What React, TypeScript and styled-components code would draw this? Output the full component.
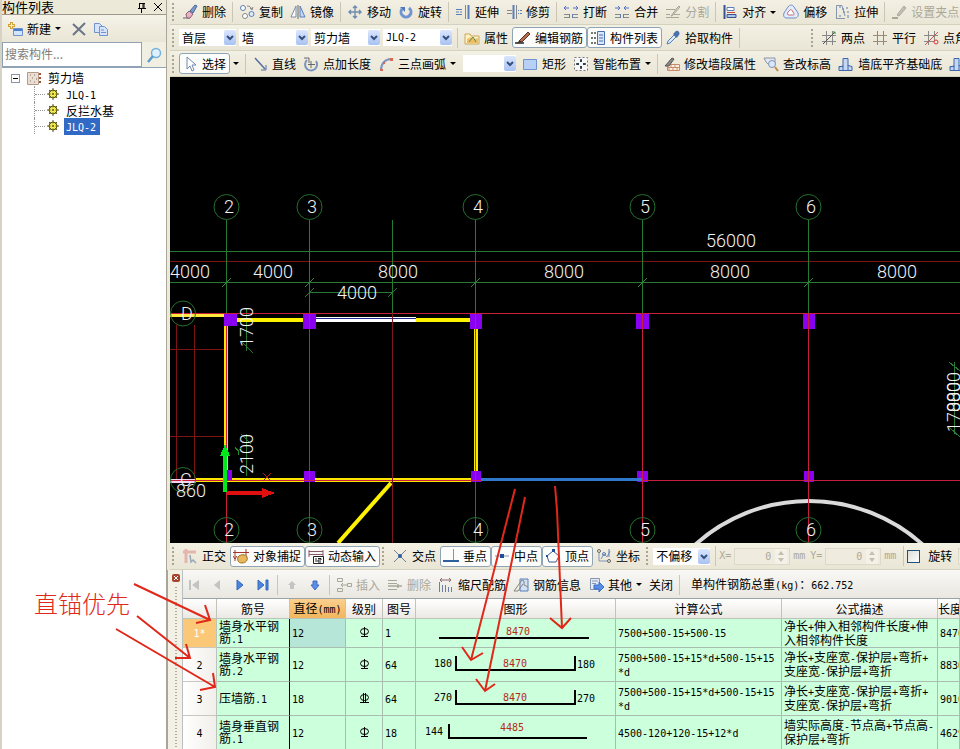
import React from "react";
import styled, { createGlobalStyle, css } from "styled-components";

const CJK = `"Noto Sans CJK SC", sans-serif`;
const MONO = `"DejaVu Sans Mono", "Noto Sans CJK SC", monospace`;
const RED = "#e0281a";

const GlobalStyle = createGlobalStyle`
  *, *::before, *::after { box-sizing: border-box; }
  body { margin: 0; font: 12px/16px ${CJK}; color: #000; background: #fff; }
  button, input, select { font: inherit; color: inherit; margin: 0; padding: 0; }
`;

const Page = styled.div`
  position: relative;
  display: grid;
  grid-template-columns: 167px minmax(0, 1fr);
  height: 100vh;
  overflow: hidden;
`;

const Latin = styled.span`
  font-family: ${MONO};
  font-size: 10px;
`;

/** Sets runs of Latin characters in the narrow fixed-width face. */
function Mixed({ children }: { children: string }) {
  const runs = children.split(/([\x20-\x7e]+)/).filter(Boolean);
  return (
    <>
      {runs.map((r, i) => (/^[\x20-\x7e]/.test(r) ? <Latin key={i}>{r}</Latin> : r))}
    </>
  );
}

/* ---------- icons ---------- */

const B = "#5a7fb8";
const G = "#a9a698";
const K = "#222";

const icons: Record<string, React.ReactNode> = {
  erase: <><path d="M1 14h7" stroke="#666" /><path d="M4 10l3-3 4 3-3 4H5z" fill="#e9b3c4" stroke="#8a5f78" /><path d="M8 7l5-6 2 1-4 7z" fill="#7a9cd0" stroke="#4a6690" /></>,
  copy: <><circle cx="4" cy="4" r="2.5" stroke={B} fill="#fff" /><circle cx="6" cy="12" r="2.5" stroke="#888" fill="#fff" /><circle cx="12.500" cy="10" r="2.5" stroke={B} fill="#dfe9fa" /><path d="M8 2c3 0 4 1 5 4M11 4l2 2 1-3" stroke="#888" /></>,
  mirror: <><path d="M6 2v11H1z" stroke="#7b8ba8" fill="#fff" /><path d="M10 2v11h5z" stroke={B} fill="#c4d7f5" /><path d="M8 1v14" stroke="#666" /></>,
  move: <path d="M8 2v12M2 8h12M6 4l2-2 2 2M6 12l2 2 2-2M4 6L2 8l2 2M12 6l2 2-2 2" stroke="#6c8db0" strokeWidth="1.4" />,
  rotate: <><path d="M4 5a5 5 0 1 0 7-1" stroke="#6f94d2" strokeWidth="3" /><path d="M2 3h5v5z" fill="#4d76bd" /></>,
  extend: <><path d="M1 8h3M5 8h2M1 5.500h6M1 10.500h6" stroke={B} /><path d="M10.500 1v14" stroke="#888" /><path d="M13.500 1v14" stroke={B} strokeWidth="2" /></>,
  trim: <><path d="M1 6.500h5M1 9.500h5" stroke="#888" /><path d="M7.500 1v14" stroke={B} strokeWidth="2" /><path d="M10.500 1v14" stroke="#888" /><path d="M12 6.500h1M14 6.500h2M12 9.500h1M14 9.500h2" stroke={B} /></>,
  split: <><path d="M1 4h5M3 2L1 4l2 2M10 4h5M13 2l2 2-2 2" stroke="#5572c8" /><path d="M1 10.500h5M1 13.500h5M10 10.500h5M10 13.500h5" stroke="#888" /><path d="M6.500 10v4M9.500 10v4" stroke={B} /></>,
  merge: <><path d="M1 4h5M4 2l2 2-2 2M10 4h5M12 2l-2 2 2 2" stroke="#5572c8" /><path d="M1 10.500h5M1 13.500h5M10 10.500h5M10 13.500h5" stroke="#888" /><path d="M6.500 10v4M9.500 10v4" stroke={B} /></>,
  cut: <><path d="M1 5.500h9M1 13.500h13M1 10.500h4M9 10.500h6" stroke={G} /><path d="M6 12l6-8 2-2 1 1-8 9z" stroke={G} fill="#d6d3c6" /></>,
  align: <><path d="M2.500 1v14" stroke="#36538e" strokeWidth="2" /><path d="M5 3.500h7v3H5z" fill="#fff" stroke={B} /><path d="M5 10.500h9v3H5z" fill="#a9c3ee" stroke="#36538e" /><path d="M5 8.500h8" stroke="#c44" /></>,
  offset: <><path d="M5 3c2-3 5-2 6 0l4 6c1 3-1 5-3 5H4c-3 0-4-2-3-5z" stroke="#6b8fcb" fill="#e4ecfa" /><path d="M7 6c1-1 2 0 3 2 2 3 1 3-1 3H6c-2 0-2-1-1-3z" stroke="#c46a7a" fill="#fff" /></>,
  stretch: <><path d="M2.500 14V1.500H8L11 12M2 14.500h9" stroke="#8794ad" /><path d="M5 3h2M8 5h2M9 8h2M5 12h2M13 3v2M14 7v2M14 11v3" stroke={B} /></>,
  grip: <><path d="M1 14h6" stroke={G} strokeWidth="2" /><path d="M6 11l7-9 2 2-7 8z" fill="#c5c2b4" stroke={G} /></>,
  property: <><path d="M1 4h5l1 2h8v8H1z" fill="#fff2c8" stroke="#c9a559" /><path d="M3 9l4-2 3 2 4-1v5H3z" fill="#f0c060" /><path d="M5 12l4-5 3 5" stroke="#5b8a5b" /></>,
  rebar: <><path d="M0 13h9" stroke={K} strokeWidth="1.500" /><path d="M4 11l9-9 2 2-8 8z" fill="#b26a4a" stroke="#5a3426" /><path d="M4 11l3 1-5 1z" fill={K} /></>,
  list: <><path d="M7.500 1.500h7v13h-7z" fill="#dce8fa" stroke="#4a6fae" /><path d="M9 5h4M9 8h4M9 11h4" stroke="#4a6fae" /><path d="M1 3h2M1 8h2M1 13h2M4 3h2M4 8h2M4 13h2" stroke="#777" strokeWidth="2" /></>,
  picker: <><path d="M2 14l1-3 6-6 2 2-6 6z" fill="#d9e8fa" stroke={B} /><path d="M8 4l4 4 1-2c2-1 2-4 0-5s-3 1-3 1z" fill="#4a6fae" /></>,
  twoPoint: <><path d="M5.500 1v14M11.500 1v14M1 5.500h14M1 11.500h14" stroke="#888" /><path d="M2 14L14 2" stroke="#555" /><path d="M12 2h2v2" stroke="#3a9a3a" /></>,
  parallel: <><path d="M5.500 1v14M11.500 1v14" stroke="#6b87c4" /><path d="M1 5.500h14M1 11.500h14" stroke="#998d7a" /></>,
  pointAngle: <><path d="M5.500 1v14M1 5.500h14M11.500 1v10M1 11.500h10" stroke="#888" /><path d="M2 15L15 2" stroke="#c55" /><circle cx="13" cy="12" r="2" stroke="#d33" /></>,
  cursor: <path d="M5 1v12l3-3 2 5 2-1-2-5h4z" fill="#fff" stroke="#7388ad" />,
  line: <><path d="M3 2l10 11" stroke="#536f9e" strokeWidth="1.500" /><path d="M14 9v5H9" stroke="#536f9e" /></>,
  addLen: <><path d="M4 4a6 6 0 1 0 9 1" stroke="#7b94bd" strokeWidth="2" /><path d="M1 2h5v5M8 5v7M5 8.500h7" stroke="#666" /></>,
  arc: <><path d="M3 14C3 8 7 3 13 3" stroke="#7d95c0" strokeWidth="2" /><path d="M2 13h3v2H2zM12 2h3v3h-3zM5 6h2v2H5z" fill="#d9675a" /></>,
  rect: <path d="M1.500 3.500h13v10h-13z" fill="#b8d0f6" stroke="#6f93cc" />,
  smart: <><path d="M1.500 1.500h13v13h-13z" stroke="#777" strokeDasharray="2 2" fill="#f7f7f7" /><path d="M8 3v3M8 10v3M3 8h3M10 8h3M7 5h2M7 11h2M5 7v2M11 7v2" stroke="#234" strokeWidth="1.500" /></>,
  wall: <><path d="M3.500 8.500h12v6h-12zM3 11.500h12M7 8v3M11 8v3M5 12v3M9 12v3M13 12v3" stroke="#c98a68" fill="#fff0e4" /><path d="M1 10l7-8 2 1-5 7z" fill="#8a8a8a" stroke="#555" /></>,
  level: <><path d="M1 2h11v5l-4 4-5-5z" fill="#e4e8ef" stroke="#8794ad" /><circle cx="9" cy="8" r="3.500" fill="#d8e8fc" stroke="#7f92b5" /><path d="M12 11l3 4" stroke="#c08a50" strokeWidth="2" /></>,
  base: <><path d="M5 2.500h5v7l4 1v4H1v-4h4z" fill="#c4d7f5" stroke="#3f66a8" /><path d="M5 10v4M10 9v5M1 11l4-1" stroke="#3f66a8" /></>,
  ortho: <><path d="M1 4h13M4 1v14" stroke="#e4b5ac" strokeWidth="3" /><path d="M8 7l1 7 2-2 3 3" stroke="#9aa6ba" strokeWidth="1.500" /></>,
  snap: <><path d="M2 2v11M0 8l2 3 2-3M13 1v8M0 4.500h16" stroke="#a3372b" /><path d="M5 9c2-3 8-3 9 0s-1 6-5 6-5-3-4-6z" fill="#e9b75c" stroke="#9a7128" /></>,
  dyn: <><path d="M1 2v7M15 2v7M1 3.500h14M1 6.500h14" stroke="#8a5a64" /><path d="M5.500 8.500h10v7h-10z" fill="#fff" stroke={K} /><path d="M8 10v4M10 10.500h3v1.500h-3v2h3" stroke={K} /></>,
  cross: <><path d="M2 2l12 12M14 2L2 14" stroke="#6b7f9e" /><circle cx="8" cy="8" r="2" fill="#2e5f9e" /></>,
  perp: <><path d="M10.500 1v12" stroke="#7f95b8" /><path d="M0 13h16" stroke="#2e5f9e" strokeWidth="2" /></>,
  mid: <><path d="M1 8h14" stroke="#7f95b8" /><path d="M6 6h4v4H6z" fill="#1e4f9a" /></>,
  vertex: <><path d="M8 3l6 5-3 6H4L2 8z" stroke="#3f5f90" /><path d="M7 1h3v3H7zM1 7h2v2H1z" fill="#1e4f9a" /></>,
  coord: <><path d="M3 5v8h9M5 11l3-5 3 3 3-6" stroke="#7f95b8" /><circle cx="3" cy="3" r="1.500" stroke="#666" /><circle cx="8" cy="6" r="1.500" stroke={B} /><circle cx="13" cy="13" r="1.500" stroke="#666" /><path d="M13 1v8" stroke={B} /></>,
  first: <path d="M3 3h2v10H3zM13 3v10L6 8z" fill="#c3c3c3" />,
  prev: <path d="M11 3v10L5 8z" fill="#c3c3c3" />,
  next: <path d="M5 3v10l6-5z" fill="#4a86e0" stroke="#3568bd" />,
  last: <path d="M3 3v10l6-5zM11 3h2v10h-2z" fill="#4a86e0" stroke="#3568bd" />,
  up: <path d="M8 4l4 4h-2v4H6V8H4z" fill="#c3c3c3" />,
  down: <path d="M8 13l4-5h-2V4H6v4H4z" fill="#5b8ee8" stroke="#3f6dc4" />,
  insert: <><path d="M1.500 1.500h5v3h-5zM1.500 11.500h5v3h-5zM11.500 6.500h4v3h-4z" stroke={G} /><path d="M11 8H5M7 6L5 8l2 2" stroke={G} /></>,
  remove: <><path d="M1 3.500h9M1 6.500h9M1 12.500h9" stroke={G} /><path d="M1 9h14M11 7v4" stroke={G} strokeWidth="1.500" /></>,
  scale: <><path d="M2 3h11M4 1L2 3l2 2M11 1l2 2-2 2" stroke="#8a6a6a" /><path d="M1.500 5v10M4.500 8v7M7.500 8v7M10.500 10v5M13.500 10v5" stroke="#6f7f9e" /></>,
  info: <><path d="M7 2h8v12H7z" fill="#cfe0f8" stroke={B} /><path d="M1 14L9 3l2 1v4l4 2M1 14h4l5-7" stroke="#8a8577" /></>,
  other: <><path d="M2.500 1.500h9v11h-9z" fill="#e4ecf8" stroke="#8794ad" /><path d="M4 4h6M4 6.500h4" stroke="#8794ad" /><path d="M6 8h5V5l5 5-5 5v-3H6z" fill="#5b8ee8" stroke="#3f6dc4" /></>,
  create: <><path d="M6.500 7.500h9v7h-9z" fill="#d3e5fb" stroke="#6f93cc" /><path d="M7 9h8" stroke="#4a7fd0" strokeWidth="2" /><path d="M4.500 1v7M1 4.500h7" stroke="#d3a13a" strokeWidth="3" /><path d="M4.500 2v5M2 4.500h5" stroke="#fff3b8" /></>,
  del: <path d="M2 3l12 11M14 2L2 14" stroke="#6b7588" strokeWidth="2" />,
  dup: <><path d="M1.500 2.500h5l3 3v6h-8z" fill="#d5e4fa" stroke="#6f93cc" /><path d="M6.500 5.500h5l3 3v6h-8z" fill="#d5e4fa" stroke="#6f93cc" /><path d="M8 9h3M8 11.500h5" stroke="#6f93cc" /></>,
  search: <><circle cx="10" cy="6" r="4.500" fill="#dff0fd" stroke="#74b2de" strokeWidth="1.500" /><path d="M7 9l-5 6" stroke="#5b9dcc" strokeWidth="2.500" /></>,
  pin: <path d="M5.500 4v5M9 4v5M10 4v5M5 4.500h6M4 9.500h8M7.500 10v4" stroke="#000" />,
  close: <path d="M4 4l8 8M12 4l-8 8" stroke="#000" />,
  wallNode: <><path d="M1.500 2.500h11v12h-11z" fill="#eadfd4" stroke="#b49a85" /><path d="M4 5h1M8 5h1M6 8h1M10 9h1M4 11h1M8 12h1" stroke="#86705e" /><path d="M13 4h2M13 8h2M13 12h2" stroke="#a3513c" strokeWidth="2" /></>,
  gear: <><circle cx="8" cy="8" r="4" fill="#f7ec50" stroke="#5b5616" /><path d="M8 2v12M2 8h12M4 4l8 8M12 4l-8 8" stroke="#5b5616" /><circle cx="8" cy="8" r="2.500" fill="#f7ec50" /><circle cx="8" cy="8" r="1" fill="#5b5616" /></>,
};

const Glyph = styled.svg`
  flex: none;
  width: 16px;
  height: 16px;
  fill: none;
`;

const Icon = ({ name }: { name: string }) => (
  <Glyph viewBox="0 0 16 16" aria-hidden="true">{icons[name]}</Glyph>
);

const Caret = styled.i`
  flex: none;
  border: 3px solid transparent;
  border-top-color: currentColor;
  border-bottom: 0;
`;

/* ---------- toolbar parts ---------- */

const Bar = styled.div<{ $h?: number }>`
  display: flex;
  align-items: center;
  flex: none;
  height: ${(p) => p.$h ?? 26}px;
  overflow: hidden;
  white-space: nowrap;
  background: linear-gradient(#f3f0e4, #e9e6d6);
  border-bottom: 1px solid #d5d1bf;
`;

const Grip = styled.span`
  flex: none;
  width: 2px;
  height: 18px;
  margin: 0 5px 0 2px;
  background: repeating-linear-gradient(#a8a595 0 2px, transparent 2px 4px);
`;

const Sep = styled.span`
  flex: none;
  width: 1px;
  height: 20px;
  margin: 0 3px 0 2px;
  background: #cbc7b5;
`;

const Tool = styled.button<{ $on?: boolean }>`
  display: flex;
  align-items: center;
  gap: 4px;
  flex: none;
  height: 21px;
  padding: 0 3px 0 2px;
  border: 1px solid transparent;
  border-radius: 3px;
  background: none;
  &:disabled { color: #aca899; }
  ${(p) => p.$on && css`
    background: #fcfcfa;
    border-color: #8fa5b5;
  `}
`;

const Space = styled.span<{ $w: number }>`
  flex: none;
  width: ${(p) => p.$w}px;
`;

type ItemProps = { icon?: string; text?: string; on?: boolean; off?: boolean; menu?: boolean; label?: string };
const Item = ({ icon, text, on, off, menu, label }: ItemProps) => (
  <Tool type="button" $on={on} disabled={off} aria-pressed={on} aria-label={label}>
    {icon && <Icon name={icon} />}
    {text}
    {menu && <Caret />}
  </Tool>
);

const ComboBox = styled.span<{ $w: number }>`
  display: grid;
  grid-template-columns: minmax(0, 1fr) 12px;
  flex: none;
  width: ${(p) => p.$w}px;
  height: 17px;
  margin-right: 3px;
  background: #fff;
`;

const Select = styled.select<{ $latin?: boolean }>`
  grid-area: 1 / 1 / 2 / 3;
  appearance: none;
  width: 100%;
  padding: 0 12px 0 3px;
  border: 0;
  background: transparent;
  line-height: 16px;
  ${(p) => p.$latin && css`font-family: ${MONO}; font-size: 10px;`}
`;

const DropMark = styled.svg`
  grid-area: 1 / 2;
  width: 12px;
  height: 15px;
  margin-top: 1px;
  border-radius: 2px;
  background: linear-gradient(#dbe6fd, #a9c2f3);
  pointer-events: none;
  fill: none;
  stroke: #33507e;
  stroke-width: 2px;
`;

const Combo = ({ w, value, label, latin }: { w: number; value: string; label: string; latin?: boolean }) => (
  <ComboBox $w={w}>
    <Select aria-label={label} $latin={latin}><option>{value}</option></Select>
    <DropMark viewBox="0 0 12 15"><path d="M3 6l3 3 3-3" /></DropMark>
  </ComboBox>
);

/* ---------- component list panel ---------- */

const Side = styled.aside`
  display: flex;
  flex-direction: column;
  border-left: 2px solid #d6d3c6;
  border-right: 1px solid #a9a697;
  background: #fff;
`;

const SideTitle = styled.header`
  display: flex;
  align-items: center;
  height: 15px;
  background: #ece9d8;
  border-bottom: 1px solid #9c998a;
  h1 { flex: 1; margin: 0; font: 13px/14px ${CJK}; }
`;

const IconButton = styled.button`
  display: flex;
  border: 0;
  background: none;
`;

const SideTools = styled.div`
  display: flex;
  align-items: center;
  gap: 6px;
  height: 27px;
  padding-left: 2px;
  background: linear-gradient(#f5f2e8, #e9e6d6);
`;

const SearchRow = styled.div`
  display: grid;
  grid-template-columns: minmax(0, 1fr) 24px;
  align-items: center;
  height: 25px;
  background: #f1eee2;
  button { justify-content: center; }
`;

const SearchInput = styled.input`
  height: 25px;
  padding: 0 2px 3px;
  border: 1px solid #8fa3b5;
  background: #fff;
  &::placeholder { color: #807d78; opacity: 1; }
`;

const Tree = styled.ul`
  flex: 1;
  margin: 0;
  padding: 2px 0 0 9px;
  list-style: none;
  border-top: 1px solid #8fa3b5;
  ul { margin: 0 0 0 23px; padding: 0; list-style: none; }
`;

const Branch = styled.div`
  display: flex;
  align-items: center;
  gap: 6px;
  height: 16px;
`;

const Expander = styled.button`
  display: grid;
  place-items: center;
  width: 9px;
  height: 9px;
  border: 1px solid #8794ad;
  background: #fff;
  &::before { content: ""; width: 5px; height: 1px; background: #000; }
`;

const Leaf = styled.li`
  display: flex;
  align-items: center;
  height: 16px;
  border-left: 1px dotted #999;
  &::before { content: ""; width: 10px; border-top: 1px dotted #999; }
`;

const LeafName = styled.span<{ $selected?: boolean }>`
  margin-left: 3px;
  padding: 0 4px 0 2px;
  line-height: 15px;
  ${(p) => p.$selected && css`background: #316ac5; color: #fff;`}
`;

const SidePanel = () => (
  <Side>
    <SideTitle>
      <h1>构件列表</h1>
      <IconButton aria-label="固定"><Icon name="pin" /></IconButton>
      <IconButton aria-label="关闭列表"><Icon name="close" /></IconButton>
    </SideTitle>
    <SideTools>
      <Item icon="create" text="新建" menu />
      <IconButton aria-label="删除构件"><Icon name="del" /></IconButton>
      <IconButton aria-label="复制构件"><Icon name="dup" /></IconButton>
    </SideTools>
    <SearchRow>
      <SearchInput aria-label="搜索构件" placeholder="搜索构件..." />
      <IconButton aria-label="搜索"><Icon name="search" /></IconButton>
    </SearchRow>
    <Tree>
      <li>
        <Branch><Expander aria-label="折叠" /><Icon name="wallNode" />剪力墙</Branch>
        <ul>
          {["JLQ-1", "反拦水基", "JLQ-2"].map((n) => (
            <Leaf key={n}>
              <Icon name="gear" />
              <LeafName $selected={n === "JLQ-2"}><Mixed>{n}</Mixed></LeafName>
            </Leaf>
          ))}
        </ul>
      </li>
    </Tree>
  </Side>
);

/* ---------- drawing area ---------- */

const Main = styled.main`
  display: flex;
  flex-direction: column;
  min-width: 0;
  height: 100vh;
`;

const Upper = styled.section`
  display: flex;
  flex-direction: column;
  flex: 1;
  min-height: 0;
  padding-left: 3px;
  background: #ece9d8;
`;

const Plan = styled.svg`
  flex: 1;
  width: 100%;
  min-height: 0;
  background: #000;
  fill: none;
  shape-rendering: crispEdges;
  text { fill: #f2f2f2; font: 300 18px Roboto, sans-serif; }
`;

const axes: [number, string][] = [[226, "2"], [309, "3"], [475, "4"], [642, "5"], [808, "6"]];
const columns: number[][] = [
  [224, 313, 13, 13], [303, 313, 13, 16], [470, 313, 12, 16], [636, 313, 13, 16], [803, 313, 12, 16],
  [227, 470, 5, 11], [304, 471, 11, 11], [471, 471, 10, 11], [637, 471, 11, 11], [804, 471, 10, 11],
];
const dims: [number, number, string][] = [
  [170, 278, "4000"], [253, 278, "4000"], [378, 278, "8000"], [544, 278, "8000"], [710, 278, "8000"],
  [877, 278, "8000"], [706, 247, "56000"], [337, 299, "4000"],
];

const PlanView = () => (
  <Plan viewBox="170 77 790 466" preserveAspectRatio="xMinYMin slice" role="img" aria-label="平面图">
    <path d="M176.500 325V480M194.500 325V480M170 349.500H226M170 436.500H226M170 261.500H960" stroke="#7c1414" />
    <path d="M170 251.500H960M170 282.500H960M309 292.500H392M226.500 220V313M309.500 220V313M392.500 220V313M475.500 220V313M642.500 220V313M808.500 220V313" stroke="#267a34" />
    {axes.map(([x]) => <path key={x} d={`M${x - 4} 287l9-9`} stroke="#2f8a3c" />)}
    <path d="M305 297l9-9M388 297l9-9M246 309v42M241 341l12 12M246 434v42M241 434l10 10M954 362v72M949 362l11 9M949 427l11 10" stroke="#267a34" />

    <path d="M170 315.500H224" stroke="#ffe93c" strokeWidth="3" />
    <path d="M237 320H303M416 320H470" stroke="#fff200" strokeWidth="4" />
    <path d="M316 319.500H416" stroke="#fff" strokeWidth="5" />
    <path d="M316 318.500H416" stroke="#26268c" />
    <path d="M226 326V480M476 329V471M196 480H475" stroke="#ffe600" strokeWidth="4" />
    <path d="M391 483L338 543" stroke="#fff200" strokeWidth="4" shapeRendering="auto" />
    <path d="M170 480.500H196" stroke="#f4d6f0" strokeWidth="4" />
    <circle cx="809" cy="671" r="170" stroke="#dadada" strokeWidth="4" shapeRendering="auto" />

    {columns.map(([x, y, w, h]) => <rect key={`${x}-${y}`} x={x} y={y} width={w} height={h} fill="#8a00f0" />)}
    <path d="M170 313.500H960M170 480.500H960M226.500 326V543M309.500 313V543M475.500 313V543M642.500 313V543M808.500 313V543" stroke="#c8203c" />
    <path d="M392.500 313V543" stroke="#7c1820" />
    <path d="M481 479H642" stroke="#2f78cc" strokeWidth="3" />

    {axes.map(([x, n]) => (
      <g key={n} shapeRendering="auto">
        <circle cx={x + 0.5} cy="207" r="12.500" stroke="#256f2e" />
        <circle cx={x + 0.5} cy="530" r="12.500" stroke="#256f2e" />
        <text x={x - 2} y="213">{n}</text>
        <text x={x - 2} y="536">{n}</text>
      </g>
    ))}
    <circle cx="183" cy="313.500" r="12.500" stroke="#256f2e" shapeRendering="auto" />
    <circle cx="183" cy="480" r="12.500" stroke="#256f2e" shapeRendering="auto" />
    <text x="181" y="320">D</text>
    <text x="180" y="486">C</text>
    <text x="176" y="497">860</text>
    {dims.map(([x, y, t]) => <text key={`${x}-${t}`} x={x} y={y}>{t}</text>)}
    <text transform="translate(253 347) rotate(-90)">1700</text>
    <text transform="translate(253 474) rotate(-90)">2100</text>
    <text transform="translate(960 432) rotate(-90)">17000</text>
    <text transform="translate(960 412) rotate(-90)">8800</text>

    <path d="M225 492V455" stroke="#00e81c" strokeWidth="4" />
    <path d="M225 444l5 12h-10z" fill="#00e81c" />
    <path d="M227 493H263" stroke="#e01010" strokeWidth="4" />
    <path d="M262 488l13 5-13 5z" fill="#e01010" />
    <path d="M263 473l8 8M271 473l-8 8" stroke="#b01818" />
    <path d="M235 447l3 4 4-4M238 451v4" stroke="#1d8a2a" />
  </Plan>
);

/* ---------- snap bar ---------- */

const Field = styled.label`
  display: flex;
  align-items: center;
  gap: 3px;
  flex: none;
  margin-right: 5px;
  font: 10px/16px ${MONO};
  color: #aca899;
`;

const NumBox = styled.span`
  display: grid;
  grid-template-columns: 40px 14px;
  height: 17px;
  border: 1px solid #dcd9c9;
  background: #efecdf;
`;

const NumInput = styled.input`
  min-width: 0;
  padding-right: 4px;
  border: 0;
  background: transparent;
  text-align: right;
  appearance: none;
`;

const Spin = styled.svg`
  width: 12px;
  height: 15px;
  background: #f3f1e8;
  fill: #c3c0b2;
`;

const Num = ({ name }: { name: string }) => (
  <Field>
    {name}=
    <NumBox>
      <NumInput type="text" defaultValue="0" disabled />
      <Spin viewBox="0 0 12 15"><path d="M3 6l3-4 3 4zM3 9h6l-3 4z" /></Spin>
    </NumBox>
    mm
  </Field>
);

const Check = styled.label`
  display: flex;
  align-items: center;
  gap: 8px;
  margin-right: 6px;
  input {
    appearance: none;
    width: 13px;
    height: 13px;
    border: 1px solid #1c5180;
    background: linear-gradient(135deg, #dcdcd7, #fff);
  }
`;

/* ---------- rebar editor ---------- */

const Dock = styled.section`
  display: grid;
  grid-template-columns: 16px minmax(0, 1fr);
  flex: none;
  height: 179px;
  overflow: hidden;
  background: #ece9d8;
`;

const DockEdge = styled.div`
  display: flex;
  flex-direction: column;
  align-items: center;
  gap: 5px;
  padding: 4px 0 0 2px;
  border-left: 1px solid #a9a697;
  border-right: 1px solid #b9c0c4;
  background: #f3f0e6;
  &::after { content: ""; flex: 1; width: 2px; background: repeating-linear-gradient(#b1ae9f 0 1px, transparent 1px 3px); }
`;

const DockClose = styled.button`
  display: grid;
  place-items: center;
  width: 8px;
  height: 8px;
  border: 0;
  border-radius: 2px;
  background: #a8442e;
  svg { width: 6px; height: 6px; stroke: #fff; stroke-width: 1px; }
`;

const DockBody = styled.div`
  min-width: 0;
`;

const DockBar = styled(Bar)`
  padding: 1px 0 0;
  background: linear-gradient(#f9f8f5, #e9e7e0);
  border-bottom: 1px solid #9aa3a8;
`;

const Total = styled.output`
  margin-left: 8px;
`;

const Sheet = styled.table`
  width: 100%;
  table-layout: fixed;
  border-collapse: separate;
  border-spacing: 0;
  line-height: 12px;
  background: #ccffdb;
`;

const Head = styled.th<{ $active?: boolean }>`
  height: 20px;
  padding: 0;
  overflow: hidden;
  white-space: nowrap;
  font-weight: 400;
  border-right: 1px solid #c3c3bb;
  border-bottom: 1px solid #b9c4bb;
  background: ${(p) => (p.$active ? "linear-gradient(#fbd08e, #f2b55c)" : "linear-gradient(#fff, #ece9e4)")};
`;

const RowHead = styled.th<{ $current?: boolean }>`
  padding: 0;
  font-weight: 400;
  border-right: 1px solid #b9c4bb;
  border-bottom: 1px solid #c8c8c0;
  background: ${(p) => (p.$current ? "#fbc878" : "linear-gradient(90deg, #fff, #f1efea)")};
  color: ${(p) => (p.$current ? "#fff" : "#000")};
`;

const Cell = styled.td<{ $center?: boolean; $edge?: boolean; $active?: boolean; $flush?: boolean; $clip?: boolean }>`
  padding: 0 ${(p) => (p.$flush ? 0 : 2)}px;
  overflow: hidden;
  word-break: break-all;
  line-break: anywhere;
  white-space: ${(p) => (p.$clip ? "nowrap" : "normal")};
  text-align: ${(p) => (p.$center ? "center" : "left")};
  border-right: 1px solid #a9bdb0;
  border-bottom: 1px solid #a9bdb0;
  ${(p) => p.$edge && css`border-right: 1px solid #000;`}
  ${(p) => p.$active && css`background: #b5e6d8;`}
`;

const Row = styled.tr<{ $h: number }>`
  height: ${(p) => p.$h}px;
`;

const Shape = styled.svg`
  display: block;
  width: 199px;
  height: 28px;
  fill: none;
  stroke: #000;
  stroke-width: 2px;
  text { font: 10px ${MONO}; fill: #000; stroke: none; }
  text.len { fill: #b52a1c; text-anchor: middle; }
`;

const Grade = styled.svg`
  width: 11px;
  height: 11px;
  fill: none;
  stroke: #000;
`;

type Bend = "straight" | "u" | "l";
const ShapeDrawing = ({ kind, len, hook }: { kind: Bend; len: string; hook?: string }) => (
  <Shape viewBox="0 0 199 28">
    {kind === "straight" && <path d="M23 19H173" />}
    {kind === "u" && <path d="M40 5V19H159V5" />}
    {kind === "l" && <path d="M33 5V19H171" />}
    <text className="len" x={kind === "straight" ? 102 : kind === "u" ? 99 : 96} y={kind === "l" ? 12 : 16}>{len}</text>
    {hook && <text x={kind === "u" ? 18 : 9} y="16">{hook}</text>}
    {kind === "u" && <text x="161" y="17">{hook}</text>}
  </Shape>
);

type Rebar = { name: string; dia: string; no: string; kind: Bend; len: string; hook?: string; formula: string; desc: string; total: string; twin?: boolean };
const bars: Rebar[] = [
  { name: "墙身水平钢筋.1", dia: "12", no: "1", kind: "straight", len: "8470", formula: "7500+500-15+500-15", desc: "净长+伸入相邻构件长度+伸入相邻构件长度", total: "8470" },
  { name: "墙身水平钢筋.2", dia: "12", no: "64", kind: "u", len: "8470", hook: "180", formula: "7500+500-15+15*d+500-15+15*d", desc: "净长+支座宽-保护层+弯折+支座宽-保护层+弯折", total: "8830" },
  { name: "压墙筋.1", dia: "18", no: "64", kind: "u", len: "8470", hook: "270", formula: "7500+500-15+15*d+500-15+15*d", desc: "净长+支座宽-保护层+弯折+支座宽-保护层+弯折", total: "9010", twin: true },
  { name: "墙身垂直钢筋.1", dia: "12", no: "18", kind: "l", len: "4485", hook: "144", formula: "4500-120+120-15+12*d", desc: "墙实际高度-节点高+节点高-保护层+弯折", total: "4629" },
];
const heads = ["", "筋号", "直径(mm)", "级别", "图号", "图形", "计算公式", "公式描述", "长度"];
const widths = [34, 73, 56, 37, 33, 200, 166, 156];

const RebarTable = () => (
  <Sheet>
    <colgroup>
      {widths.map((w, i) => <col key={i} width={w} />)}
      <col />
    </colgroup>
    <thead>
      <tr>{heads.map((h) => <Head key={h} $active={h.startsWith("直径")} scope="col"><Mixed>{h}</Mixed></Head>)}</tr>
    </thead>
    <tbody>
      {bars.map((b, i) => (
        <Row key={b.name} $h={i ? 34 : 29}>
          <RowHead scope="row" $current={i === 0}><Latin>{i ? i + 1 : "1*"}</Latin></RowHead>
          <Cell $edge><Mixed>{b.name}</Mixed></Cell>
          <Cell $active={i === 0}><Latin>{b.dia}</Latin></Cell>
          <Cell $center>
            <Grade viewBox="0 0 11 11">
              <ellipse cx="5.500" cy="4.500" rx="4" ry="3" />
              <path d={b.twin ? "M4.500 0v10M6.500 0v10M1 9.500h9" : "M5.500 0v10M2 9.500h7"} />
            </Grade>
          </Cell>
          <Cell><Latin>{b.no}</Latin></Cell>
          <Cell $flush><ShapeDrawing kind={b.kind} len={b.len} hook={b.hook} /></Cell>
          <Cell><Latin>{b.formula}</Latin></Cell>
          <Cell><Mixed>{b.desc}</Mixed></Cell>
          <Cell $clip><Latin>{b.total}</Latin></Cell>
        </Row>
      ))}
    </tbody>
  </Sheet>
);

/* ---------- red pen notes over the page ---------- */

const Notes = styled.svg`
  position: absolute;
  left: 0;
  bottom: 0;
  width: 960px;
  height: 749px;
  pointer-events: none;
  fill: none;
  stroke: ${RED};
  stroke-width: 2px;
  text { font: 300 24px ${CJK}; fill: ${RED}; stroke: none; }
`;

export default function App() {
  return (
    <Page>
      <GlobalStyle />
      <SidePanel />
      <Main>
        <Upper>
          <Bar $h={25}>
            <Grip />
            <Item icon="erase" text="删除" /><Sep />
            <Item icon="copy" text="复制" /><Item icon="mirror" text="镜像" /><Sep />
            <Item icon="move" text="移动" /><Item icon="rotate" text="旋转" /><Sep />
            <Item icon="extend" text="延伸" /><Item icon="trim" text="修剪" /><Sep />
            <Item icon="split" text="打断" /><Item icon="merge" text="合并" /><Item icon="cut" text="分割" off /><Sep />
            <Item icon="align" text="对齐" menu /><Item icon="offset" text="偏移" /><Item icon="stretch" text="拉伸" /><Sep />
            <Item icon="grip" text="设置夹点" off />
          </Bar>
          <Bar>
            <Grip />
            <Combo w={57} value="首层" label="楼层" />
            <Combo w={69} value="墙" label="构件类别" />
            <Combo w={69} value="剪力墙" label="构件类型" />
            <Combo w={69} value="JLQ-2" label="构件" latin />
            <Sep />
            <Item icon="property" text="属性" />
            <Item icon="rebar" text="编辑钢筋" on />
            <Item icon="list" text="构件列表" on />
            <Item icon="picker" text="拾取构件" />
            <Sep /><Space $w={66} /><Grip />
            <Item icon="twoPoint" text="两点" />
            <Item icon="parallel" text="平行" />
            <Item icon="pointAngle" text="点角" />
          </Bar>
          <Bar>
            <Grip />
            <Item icon="cursor" text="选择" on />
            <Tool type="button" aria-label="选择方式"><Caret /></Tool>
            <Sep />
            <Item icon="line" text="直线" />
            <Item icon="addLen" text="点加长度" />
            <Item icon="arc" text="三点画弧" menu />
            <Space $w={3} />
            <Combo w={53} value="" label="画弧参数" />
            <Item icon="rect" text="矩形" />
            <Item icon="smart" text="智能布置" menu />
            <Sep />
            <Item icon="wall" text="修改墙段属性" />
            <Item icon="level" text="查改标高" />
            <Item icon="base" text="墙底平齐基础底" />
            <Item icon="base" label="墙顶平齐" />
          </Bar>
          <PlanView />
          <Bar $h={27}>
            <Grip />
            <Item icon="ortho" text="正交" />
            <Item icon="snap" text="对象捕捉" on />
            <Item icon="dyn" text="动态输入" on />
            <Grip />
            <Item icon="cross" text="交点" />
            <Item icon="perp" text="垂点" on />
            <Item icon="mid" text="中点" on />
            <Item icon="vertex" text="顶点" on />
            <Item icon="coord" text="坐标" />
            <Grip />
            <Combo w={57} value="不偏移" label="偏移方式" />
            <Sep />
            <Num name="X" />
            <Num name="Y" />
            <Sep />
            <Check><input type="checkbox" />旋转</Check>
            <NumBox><NumInput type="text" aria-label="旋转角度" disabled /></NumBox>
          </Bar>
        </Upper>
        <Dock>
          <DockEdge>
            <DockClose aria-label="关闭面板"><svg viewBox="0 0 6 6"><path d="M1 1l4 4M5 1L1 5" /></svg></DockClose>
          </DockEdge>
          <DockBody>
            <DockBar $h={29}>
              <Item icon="first" label="首条" off /><Item icon="prev" label="上一条" off />
              <Item icon="next" label="下一条" /><Item icon="last" label="末条" /><Sep />
              <Item icon="up" label="上移" off /><Item icon="down" label="下移" /><Sep />
              <Item icon="insert" text="插入" off />
              <Item icon="remove" text="删除" off />
              <Item icon="scale" text="缩尺配筋" />
              <Item icon="info" text="钢筋信息" />
              <Item icon="other" text="其他" menu />
              <Item text="关闭" />
              <Sep />
              <Total><Mixed>单构件钢筋总重(kg)：662.752</Mixed></Total>
            </DockBar>
            <RebarTable />
          </DockBody>
        </Dock>
      </Main>
      <Notes viewBox="0 0 960 749">
        <text x="34" y="613">直锚优先</text>
        <path d="M134 584L210 620M205 605L210 620L196 623" />
        <path d="M137 616L190 658M186 644L190 658L175 658" />
        <path d="M116 629L215 687M213 673L215 687L200 690" />
        <path d="M515 489L471 660M462 647L471 660L483 653" />
        <path d="M525 497L485 691M476 679L485 691L495 684" />
        <path d="M555 486L557 510L562 628M550 618L562 628L571 618" />
      </Notes>
    </Page>
  );
}
